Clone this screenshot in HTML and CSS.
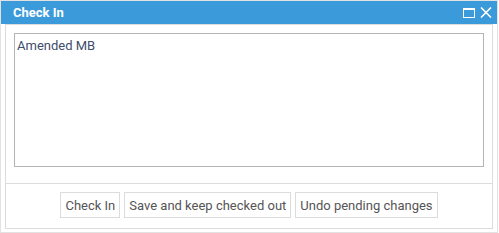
FILE: index.html
```html
<!DOCTYPE html>
<html lang="en">
  <head>
    <meta charset="UTF-8" />
    <title>Check In</title>
    <link rel="stylesheet" href="styles.css">
  </head>
  <body>
    <div class="window">
      <!-- TITLE -->
      <div class="titlebar">
        <span class="title">Check In</span>
        <div class="actions">
          <svg class="icon" width="12" height="10" viewBox="0 0 12 10">
            <rect x="0.5" y="0.5" width="11" height="9" fill="none" stroke="#fff" stroke-width="1" />
            <rect x="0" y="0" width="12" height="2" fill="#fff" />
          </svg>
          <svg class="icon" width="12" height="11" viewBox="0 0 12 11">
            <path d="M1 0.5 L11 10.5 M11 0.5 L1 10.5" stroke="#fff" stroke-width="1.6" fill="none" />
          </svg>
        </div>
      </div>

      <!-- BODY -->
      <div class="window-body">
        <div class="panel">
          <div class="content">
            <textarea class="comment">Amended MB</textarea>
          </div>
          <div class="footer">
            <button>Check In</button>
            <button>Save and keep checked out</button>
            <button>Undo pending changes</button>
          </div>
        </div>
      </div>
    </div>
  </body>
</html>
```

FILE: styles.css
```css
body {
  margin: 0;
  background: #fff;
  font-family: Roboto, "Liberation Sans", sans-serif;
}

.window {
  width: 498px;
  border: 1px solid #e2e2e2;
  box-sizing: border-box;
  background: #fff;
}

.titlebar {
  height: 23px;
  background: #3b9ad9;
  display: flex;
  align-items: center;
  justify-content: space-between;
  padding: 0 5px 0 12px;
}

.title {
  color: #fff;
  font-weight: bold;
  font-size: 13px;
}

.actions {
  display: flex;
  align-items: center;
  gap: 5px;
}

.icon {
  display: block;
}

.window-body {
  padding: 0 4px 3px 4px;
}

.panel {
  border: 1px solid #dcdcdc;
}

.content {
  padding: 8px 8px 16px 8px;
}

.comment {
  display: block;
  width: 100%;
  height: 134px;
  box-sizing: border-box;
  border: 1px solid #b4b4b4;
  padding: 4px 2px;
  margin: 0;
  resize: none;
  font-family: Roboto, "Liberation Sans", sans-serif;
  font-size: 13px;
  color: #3e4d6c;
}

.footer {
  border-top: 1px solid #dcdcdc;
  padding: 8px 0 10px 0;
  display: flex;
  justify-content: center;
  gap: 4px;
}

button {
  height: 26px;
  padding: 0 4px;
  background: #fff;
  border: 1px solid #dcdcdc;
  color: #555;
  font-family: Roboto, "Liberation Sans", sans-serif;
  font-size: 13px;
  cursor: pointer;
}
```
